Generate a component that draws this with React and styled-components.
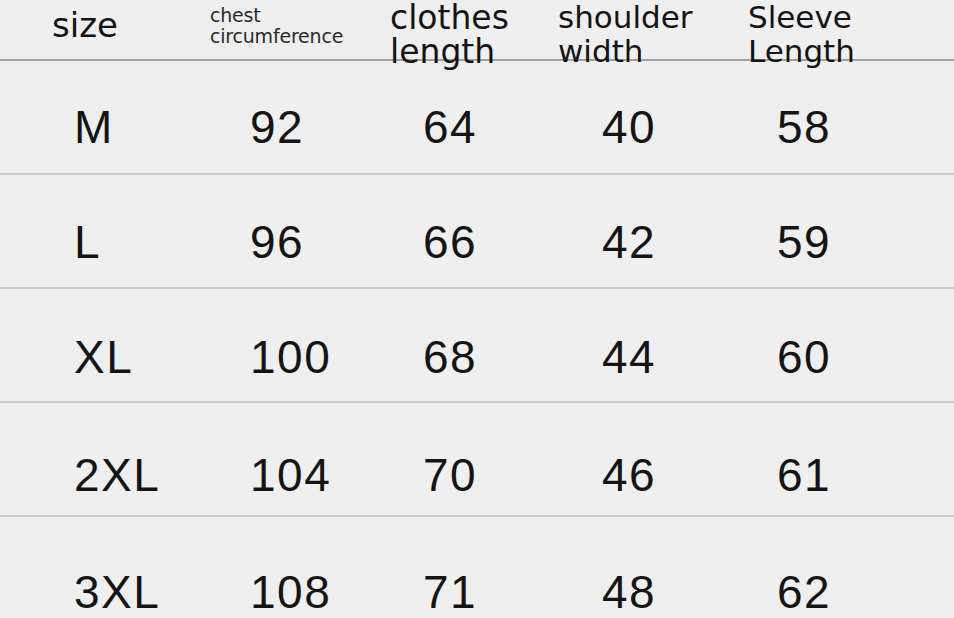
import styled, { createGlobalStyle } from "styled-components";

const GlobalStyle = createGlobalStyle`
  html, body {
    margin: 0;
    padding: 0;
    background: #efefef;
    overflow: hidden;
  }
`;

const sizes = [
  { size: "M", chest: 92, length: 64, shoulder: 40, sleeve: 58, pad: 43 },
  { size: "L", chest: 96, length: 66, shoulder: 42, sleeve: 59, pad: 44 },
  { size: "XL", chest: 100, length: 68, shoulder: 44, sleeve: 60, pad: 45 },
  { size: "2XL", chest: 104, length: 70, shoulder: 46, sleeve: 61, pad: 49 },
  { size: "3XL", chest: 108, length: 71, shoulder: 48, sleeve: 62, pad: 52 },
];

const App = () => {
  return (
    <>
      <GlobalStyle />
      <Chart>
        <HeaderRow>
          <HeadCell $size={34} $line={34} $top={8}>size</HeadCell>
          <HeadCell $size={19} $line={21} $top={5} $light>
            chest
            <br />
            circumference
          </HeadCell>
          <HeadCell $size={33} $line={34} $top={1}>
            clothes
            <br />
            length
          </HeadCell>
          <HeadCell $size={31} $line={34}>
            shoulder
            <br />
            width
          </HeadCell>
          <HeadCell $size={31} $line={34}>
            Sleeve
            <br />
            Length
          </HeadCell>
        </HeaderRow>

        {sizes.map((row) => (
          <DataRow key={row.size}>
            <Cell $top={row.pad}>{row.size}</Cell>
            <Cell $top={row.pad}>{row.chest}</Cell>
            <Cell $top={row.pad}>{row.length}</Cell>
            <Cell $top={row.pad}>{row.shoulder}</Cell>
            <Cell $top={row.pad}>{row.sleeve}</Cell>
          </DataRow>
        ))}
      </Chart>
    </>
  );
};

const Chart = styled.div`
  width: 954px;
  height: 618px;
  overflow: hidden;
  background: #efefef;
  color: #141414;
`;

const HeaderRow = styled.div`
  display: grid;
  grid-template-columns: 158px 180px 168px 190px 1fr;
  padding-left: 52px;
  height: 59px;
  border-bottom: 2px solid #a3a39d;
  font-family: "DejaVu Sans", Verdana, sans-serif;
`;

const HeadCell = styled.div`
  font-size: ${({ $size }) => $size}px;
  line-height: ${({ $line }) => $line}px;
  padding-top: ${({ $top }) => $top || 0}px;
  color: ${({ $light }) => ($light ? "#2a2a2a" : "#141414")};
  white-space: nowrap;
  letter-spacing: ${({ $light }) => ($light ? "-0.2px" : "0")};
`;

const DataRow = styled.div`
  display: grid;
  grid-template-columns: 176px 173px 179px 175px 1fr;
  padding-left: 74px;
  height: 112px;
  border-bottom: 2px solid #cbcbcb;
  font-family: "Liberation Sans", Arial, sans-serif;
`;

const Cell = styled.div`
  font-size: 46px;
  line-height: 46px;
  letter-spacing: 1.5px;
  padding-top: ${({ $top }) => $top}px;
`;

export default App;
